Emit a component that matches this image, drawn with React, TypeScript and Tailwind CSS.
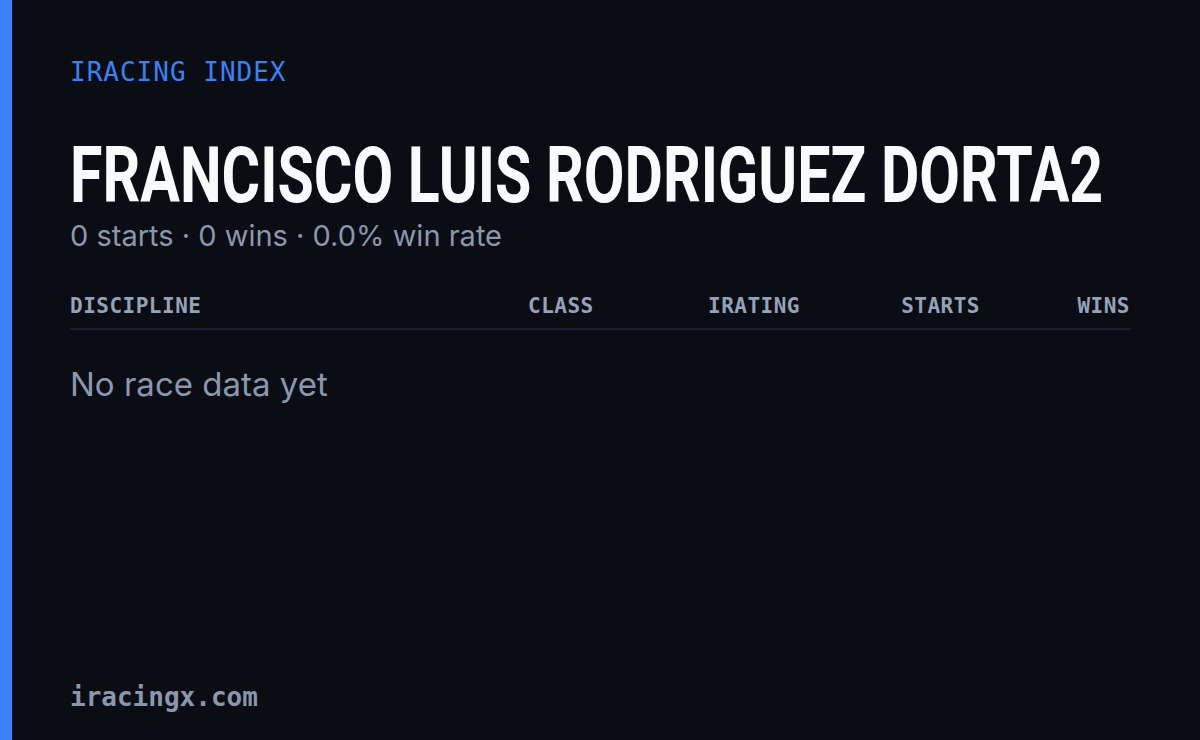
import React from "react";

const columns = [
  { label: "DISCIPLINE", cls: "w-[458px] text-left" },
  { label: "CLASS", cls: "w-[130px] text-left" },
  { label: "IRATING", cls: "w-[142px] text-right" },
  { label: "STARTS", cls: "w-[180px] text-right" },
  { label: "WINS", cls: "w-[150px] text-right" },
];

const mono = "font-['DejaVu_Sans_Mono','Liberation_Mono',monospace]";

const App = () => {
  return (
    <div className="flex h-[740px] w-[1200px] bg-[#0a0d14] overflow-hidden">
      <div className="w-[12px] shrink-0 bg-[#3b82f6]" />

      <div className="flex min-w-0 flex-1 flex-col pl-[58px] pr-[69px] pt-[59px] pb-[30px]">
        <div className={`${mono} text-[26px] leading-[26px] tracking-[1px] text-[#3b82f6]`}>
          IRACING INDEX
        </div>

        <div className="mt-[52px] h-[78px] whitespace-nowrap">
          <span className="inline-block origin-left scale-x-[0.757] font-['Roboto',sans-serif] text-[78px] font-bold leading-[78px] text-[#f8fafc]">
            FRANCISCO LUIS RODRIGUEZ DORTA2
          </span>
        </div>

        <div className="mt-[7px] font-['Inter',sans-serif] text-[29px] leading-[28px] text-[#8b97ad]">
          0 starts · 0 wins · 0.0% win rate
        </div>

        {/* table header */}
        <div className="mt-[46px] flex border-b-2 border-[#1a1f2b] pb-[11px]">
          {columns.map((c) => (
            <div
              key={c.label}
              className={`${mono} ${c.cls} text-[21px] font-bold leading-[21px] tracking-[0.5px] text-[#94a3b8]`}
            >
              {c.label}
            </div>
          ))}
        </div>

        <div className="mt-[38px] font-['Inter',sans-serif] text-[33px] leading-[32px] text-[#8b97ad]">
          No race data yet
        </div>

        <div className={`${mono} mt-auto text-[26px] font-bold leading-[26px] text-[#8b97ad]`}>
          iracingx.com
        </div>
      </div>
    </div>
  );
};

export default App;
